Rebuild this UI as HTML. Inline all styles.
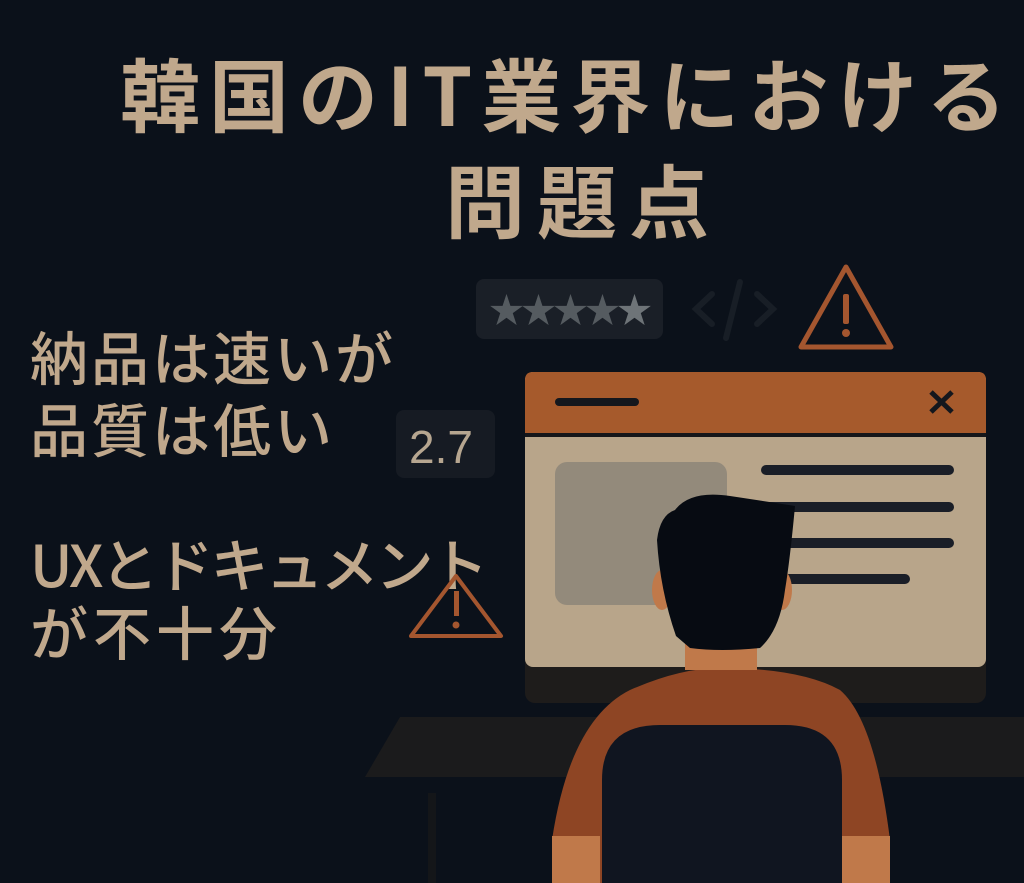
<!DOCTYPE html>
<html><head><meta charset="utf-8"><style>
html,body{margin:0;padding:0}
body{width:1024px;height:883px;background:#0b111a;position:relative;overflow:hidden;font-family:"Noto Sans CJK JP","Liberation Sans",sans-serif;color:#c0a88c}
.t{position:absolute;white-space:nowrap;font-weight:700;line-height:1}
.s{position:absolute;white-space:nowrap;font-weight:500;line-height:1;font-size:58px}
</style></head><body>
<div class="t" style="left:120px;top:52px;font-size:80px;letter-spacing:9px">韓国のIT業界における</div>
<div class="t" style="left:445px;top:158px;font-size:80px;letter-spacing:12px">問題点</div>

<div class="s" style="left:30px;top:326px;letter-spacing:3px">納品は速いが</div>
<div class="s" style="left:30px;top:398px;letter-spacing:3px">品質は低い</div>
<div class="s" style="left:30px;top:533px;letter-spacing:-3px">UXとドキュメント</div>
<div class="s" style="left:30px;top:601px;letter-spacing:5px">が不十分</div>

<div style="position:absolute;left:476px;top:279px;width:187px;height:60px;background:#1a1f27;border-radius:8px"></div>
<div style="position:absolute;left:489px;top:288px;font-size:35px;color:#555b60;letter-spacing:-3px;line-height:42px">★★★★<span style="color:#6e7478">★</span></div>
<div style="position:absolute;left:396px;top:410px;width:99px;height:68px;background:#161b23;border-radius:8px"></div>
<div style="position:absolute;left:409px;top:420px;font-size:46px;color:#b6a690;font-family:'Liberation Sans',sans-serif">2.7</div>

<svg width="1024" height="883" style="position:absolute;left:0;top:0">
 <g stroke="#181e26" stroke-width="6" fill="none" stroke-linecap="round">
  <path d="M712 294 L696 309 L712 324"/><path d="M757 294 L773 309 L757 324"/><path d="M740 282 L726 338"/>
 </g>
 <path d="M846 267 L891 347 L801 347 Z" fill="none" stroke="#a4562f" stroke-width="5" stroke-linejoin="round"/>
 <rect x="843" y="294" width="6" height="30" rx="2" fill="#a4562f"/><circle cx="846" cy="333" r="4" fill="#a4562f"/>
 <path d="M456 576 L501 636 L411 636 Z" fill="none" stroke="#a4562f" stroke-width="4" stroke-linejoin="round"/>
 <rect x="454" y="591" width="5" height="25" fill="#a4562f"/><circle cx="456" cy="625" r="3.5" fill="#a4562f"/>
 <path d="M400 717 L1024 717 L1024 777 L365 777 Z" fill="#1b1b1c"/>
 <rect x="428" y="793" width="8" height="90" fill="#141619"/>
 <rect x="525" y="372" width="461" height="331" rx="10" fill="#1e1c1b"/>
 <rect x="525" y="372" width="461" height="295" rx="8" fill="#b8a58a"/>
 <path d="M533 372 H978 Q986 372 986 380 V433 H525 V380 Q525 372 533 372Z" fill="#a65a2c"/>
 <rect x="525" y="433" width="461" height="4" fill="#15161a"/>
 <rect x="555" y="398" width="84" height="8" rx="4" fill="#14171d"/>
 <path d="M931 392 L952 412 M952 392 L931 412" stroke="#14171d" stroke-width="5"/>
 <rect x="555" y="462" width="172" height="143" rx="12" fill="#938a7b"/>
 <rect x="761" y="465" width="193" height="10" rx="5" fill="#1a1e27"/>
 <rect x="761" y="502" width="193" height="10" rx="5" fill="#1a1e27"/>
 <rect x="761" y="538" width="193" height="10" rx="5" fill="#1a1e27"/>
 <rect x="761" y="574" width="149" height="10" rx="5" fill="#1a1e27"/>
 <path d="M552 883 L552 840 Q570 720 630 690 Q680 668 720 668 Q800 668 840 690 Q875 720 890 840 L890 883 Z" fill="#8e4524"/>
 <path d="M552 836 L600 836 L600 883 L552 883 Z" fill="#c0794a"/>
 <path d="M840 836 L890 836 L890 883 L840 883 Z" fill="#c0794a"/>
 <path d="M602 883 L602 780 Q602 725 660 725 L785 725 Q842 725 842 780 L842 883 Z" fill="#101520"/>
 <rect x="685" y="610" width="72" height="60" fill="#c0794a"/>
 <ellipse cx="662" cy="590" rx="10" ry="20" fill="#c0794a"/>
 <ellipse cx="782" cy="590" rx="10" ry="20" fill="#c0794a"/>
 <path d="M676 636 Q660 590 657 540 Q660 515 675 510 Q690 490 730 496 Q770 502 795 506 Q790 560 785 590 Q780 630 760 648 Q720 652 690 648 Z" fill="#070b12"/>
</svg>
</body></html>
